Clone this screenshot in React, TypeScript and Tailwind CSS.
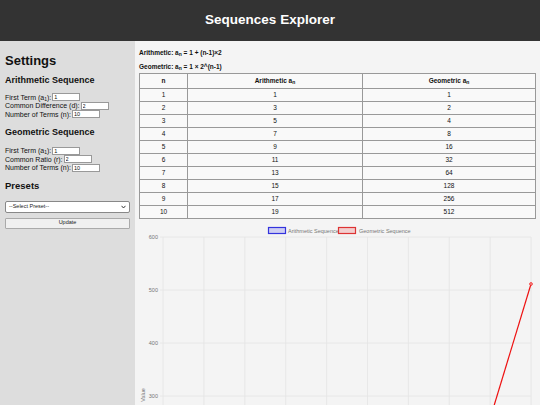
import React from 'react';

const rows = Array.from({ length: 10 }, (_, i) => ({
  n: i + 1,
  arith: 1 + i * 2,
  geo: Math.pow(2, i),
}));

const Sub = ({ children }: { children: React.ReactNode }) => (
  <sub className="text-[5px] align-baseline relative top-[1px]">{children}</sub>
);

const Field = ({ label, sub, rest, value, width }: { label: string; sub?: string; rest: string; value: string; width: string }) => (
  <div className="flex items-center h-[8.5px] text-[7px] leading-none text-[#111]">
    <span>
      {label}
      {sub && <Sub>{sub}</Sub>}
      {rest}
    </span>
    <input
      readOnly
      value={value}
      className={`ml-[1px] h-[8px] ${width} bg-white border border-[#999] text-[5.5px] px-[1px] leading-none outline-none`}
    />
  </div>
);

const Chart = () => {
  const xs = Array.from({ length: 10 }, (_, i) => 24 + i * 40.9);
  const ys = [
    { y: 15, label: '600' },
    { y: 68, label: '500' },
    { y: 121, label: '400' },
    { y: 174, label: '300' },
  ];
  return (
    <svg width="397" height="190" className="block">
      <rect x="129.5" y="5.5" width="17" height="6" fill="rgba(54,54,235,0.2)" stroke="#3333dd" strokeWidth="1.2" />
      <text x="149" y="10.5" fontSize="5.5" fill="#777" fontFamily="Liberation Sans, Arial, sans-serif">Arithmetic Sequence</text>
      <rect x="199.5" y="5.5" width="17" height="6" fill="rgba(235,54,54,0.2)" stroke="#dd3333" strokeWidth="1.2" />
      <text x="220" y="10.5" fontSize="5.5" fill="#777" fontFamily="Liberation Sans, Arial, sans-serif">Geometric Sequence</text>
      {xs.map((x) => (
        <line key={x} x1={x} y1={15} x2={x} y2={190} stroke="#e4e4e4" strokeWidth="0.8" />
      ))}
      {ys.map((t) => (
        <g key={t.label}>
          <line x1={21} y1={t.y} x2={392} y2={t.y} stroke="#e4e4e4" strokeWidth="0.8" />
          <text x={19} y={t.y + 2} fontSize="5.5" fill="#777" textAnchor="end" fontFamily="Liberation Sans, Arial, sans-serif">
            {t.label}
          </text>
        </g>
      ))}
      <text
        x={6}
        y={173}
        fontSize="5.5"
        fill="#777"
        textAnchor="middle"
        transform="rotate(-90 6 173)"
        fontFamily="Liberation Sans, Arial, sans-serif"
      >
        Value
      </text>
      <line x1={351} y1={197} x2={392} y2={62} stroke="#ee1111" strokeWidth="1.2" />
      <circle cx={392} cy={62} r={1.4} fill="#f5a0a0" stroke="#ee1111" strokeWidth="0.7" />
    </svg>
  );
};

export default function App() {
  return (
    <div className="w-[540px] h-[405px] overflow-hidden flex flex-col font-['Liberation_Sans',Arial,sans-serif]">
      <header className="h-[41px] shrink-0 bg-[#333] flex items-center justify-center">
        <h1 className="text-white font-bold text-[13.5px]">Sequences Explorer</h1>
      </header>
      <div className="flex flex-1 min-h-0">
        <aside className="w-[135px] shrink-0 bg-[#dddddd] px-[5px] pt-[13px] flex flex-col">
          <h2 className="text-[13px] font-bold leading-none text-[#111]">Settings</h2>
          <h3 className="mt-[9px] text-[9px] font-bold leading-none text-[#111]">Arithmetic Sequence</h3>
          <div className="mt-[8px] flex flex-col">
            <Field label="First Term (a" sub="1" rest="):" value="1" width="w-[28px]" />
            <Field label="Common Difference (d):" rest="" value="2" width="w-[28px]" />
            <Field label="Number of Terms (n):" rest="" value="10" width="w-[28px]" />
          </div>
          <h3 className="mt-[9px] text-[9px] font-bold leading-none text-[#111]">Geometric Sequence</h3>
          <div className="mt-[10px] flex flex-col">
            <Field label="First Term (a" sub="1" rest="):" value="1" width="w-[28px]" />
            <Field label="Common Ratio (r):" rest="" value="2" width="w-[28px]" />
            <Field label="Number of Terms (n):" rest="" value="10" width="w-[28px]" />
          </div>
          <h3 className="mt-[9px] text-[9.5px] font-bold leading-none text-[#111]">Presets</h3>
          <div className="mt-[10px] h-[12px] w-full bg-white border border-[#888] rounded-[2px] flex items-center justify-between px-[3px]">
            <span className="text-[5.5px] text-[#222]">--Select Preset--</span>
            <svg width="5" height="4" viewBox="0 0 5 4">
              <path d="M0.5 0.8 L2.5 3 L4.5 0.8" fill="none" stroke="#222" strokeWidth="0.9" />
            </svg>
          </div>
          <button className="mt-[5px] h-[11px] w-full bg-[#f0f0f0] border border-[#aaa] rounded-[1px] text-[5.5px] text-[#222] leading-none">
            Update
          </button>
        </aside>
        <main className="flex-1 bg-[#f4f4f4] px-[4px] pt-[9px] flex flex-col">
          <p className="text-[6.5px] font-bold leading-none text-[#111]">
            Arithmetic: a<Sub>n</Sub> = 1 + (n-1)×2
          </p>
          <p className="mt-[7px] text-[6.5px] font-bold leading-none text-[#111]">
            Geometric: a<Sub>n</Sub> = 1 × 2^(n-1)
          </p>
          <table className="mt-[3px] w-[397px] border-collapse text-[6.5px] text-[#111] bg-[#f9f9f9]">
            <thead>
              <tr className="h-[15px]">
                <th className="w-[48px] border border-[#999] font-bold">n</th>
                <th className="w-[175px] border border-[#999] font-bold">
                  Arithmetic a<Sub>n</Sub>
                </th>
                <th className="border border-[#999] font-bold">
                  Geometric a<Sub>n</Sub>
                </th>
              </tr>
            </thead>
            <tbody>
              {rows.map((r) => (
                <tr key={r.n} className="h-[13px]">
                  <td className="border border-[#999] text-center">{r.n}</td>
                  <td className="border border-[#999] text-center">{r.arith}</td>
                  <td className="border border-[#999] text-center">{r.geo}</td>
                </tr>
              ))}
            </tbody>
          </table>
          <div className="mt-[3px]">
            <Chart />
          </div>
        </main>
      </div>
    </div>
  );
}
